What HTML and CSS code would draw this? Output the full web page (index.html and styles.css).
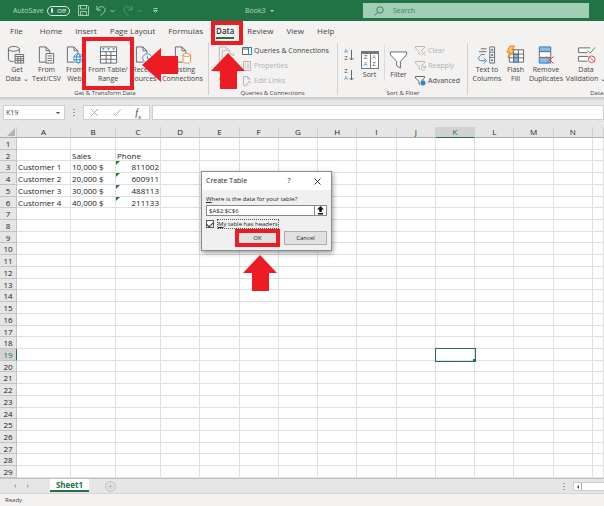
FILE: index.html
```html
<!DOCTYPE html>
<html lang="en">
<head>
<meta charset="utf-8">
<title>Book3 - Excel</title>
<link rel="stylesheet" href="styles.css">
</head>
<body>
<header class="titlebar">
  <span class="autosave">AutoSave</span>
  <button class="toggle" type="button"><i class="knob"></i>Off</button>
  <button class="quick" type="button" aria-label="Save"><svg width="11" height="11" viewBox="0 0 11 11"><path d="M.5.5h9l1 1v9H.5zM2.500.5v3.500h6v-3.500M2.500 10.500v-4h6v4M4.500 8.500v2"/></svg></button>
  <button class="quick undo" type="button" aria-label="Undo"><svg width="10" height="11" viewBox="0 0 10 11"><path d="M1 1v4h4M1 5C3 1.500 6 .8 8 2.500S9.500 7 4.500 10.500"/></svg></button>
  <svg class="chev" width="5" height="4" viewBox="0 0 5 4"><path d="M.5 1l2 2 2-2"/></svg>
  <button class="quick faded" type="button" aria-label="Redo"><svg width="10" height="11" viewBox="0 0 10 11"><path d="M9 1v4H5M9 5C7 1.500 4 .8 2 2.500S.5 7 5.500 10.500"/></svg></button>
  <svg class="chev faded" width="5" height="4" viewBox="0 0 5 4"><path d="M.5 1l2 2 2-2"/></svg>
  <svg class="chev more" width="5" height="6" viewBox="0 0 5 6"><path d="M.5.5h4M.5 2.500l2 2 2-2z"/></svg>
  <button class="book" type="button">Book3 <span class="caret"></span></button>
  <label class="search"><svg width="10" height="10" viewBox="0 0 10 10"><circle cx="6" cy="4" r="3.200"/><path d="M3.700 6.300L.6 9.400"/></svg><input type="text" placeholder="Search" aria-label="Search"></label>
</header>

<nav class="tabs">
  <a href="#" class="file">File</a><a href="#">Home</a><a href="#">Insert</a><a href="#">Page Layout</a><a href="#">Formulas</a><a href="#" class="current">Data</a><a href="#">Review</a><a href="#">View</a><a href="#">Help</a>
</nav>

<main class="ribbon">
  <section class="group transform">
    <div class="tools">
      <button class="big" type="button"><svg width="20" height="20" viewBox="0 0 20 20"><path d="M13 8V3.500C13 2 10 1 7 1S1.500 2 1.500 3.500v11C1.500 16 4 17 7 17M1.500 3.500C1.500 5 4 6 7 6s6-1 6-2.500"/><path class="w" d="M8.500 9.500h9v9h-9z"/><path d="M8.500 11.500h9M8.500 14h9M8.500 16h9M11.500 11.500v7M14.500 11.500v7"/></svg>Get<br>Data ⌄</button>
      <button class="big" type="button"><svg width="20" height="20" viewBox="0 0 20 20"><path d="M10 17.500H2.500v-16h7l4 4V8M9.500 1.500v4h4"/><path class="w" d="M9.500 8.500h8v10h-8z"/><path d="M11 11h5M11 13.500h5M11 16h5"/></svg>From<br>Text/CSV</button>
      <button class="big" type="button"><svg width="20" height="20" viewBox="0 0 20 20"><path d="M10 17.500H2.500v-16h7l4 4V8M9.500 1.500v4h4"/><g class="blue"><circle class="w" cx="14" cy="13.500" r="4.800"/><ellipse cx="14" cy="13.500" rx="2" ry="4.800"/><path d="M9.500 12h9M9.500 15h9"/></g></svg>From<br>Web</button>
      <button class="big" type="button"><svg width="20" height="20" viewBox="0 0 20 20"><path class="w" d="M1.500 1.500h17v17h-17z"/><path d="M1.500 6.500h17M1.500 10.500h17M1.500 14.500h17M7.500 6.500v12M12.500 6.500v12"/><path class="fillblue" d="M3 3h3L4.500 5zM8.500 3h3L10 5zM14 3h3l-1.500 2z"/></svg>From Table/<br>Range</button>
      <button class="big" type="button"><svg width="20" height="20" viewBox="0 0 20 20"><path d="M10 17.500H2.500v-16h7l4 4V8M9.500 1.500v4h4"/><g class="blue"><circle class="w" cx="14" cy="13.500" r="4.800"/><path d="M14 10.500v3.500h2.500"/></g></svg>Recent<br>Sources</button>
      <button class="big" type="button"><svg width="20" height="20" viewBox="0 0 20 20"><path d="M10 17.500H2.500v-16h7l4 4V8M9.500 1.500v4h4"/><g class="orange"><path class="w" d="M10.500 10v7c0 2 8 2 8 0v-7c0-2-8-2-8 0c0 2 8 2 8 0"/></g></svg>Existing<br>Connections</button>
    </div>
    <h2>Get &amp; Transform Data</h2>
  </section>
  <section class="group queries">
    <div class="tools">
      <button class="big dim" type="button"><svg width="20" height="20" viewBox="0 0 20 20"><path d="M10 17.500H2.500v-16h7l4 4V8M9.500 1.500v4h4M5.500 14V5.500h3"/><path d="M10 12c1-4 6-4 7.500-1V8.500M18 13c-1 4-6 4-7.500 1V17"/></svg>Refresh<br>All ⌄</button>
      <div class="stack">
        <button type="button"><svg width="10" height="10" viewBox="0 0 10 10"><path class="w" d="M.5 1.500h9v7h-9zM.5 3h9"/><path class="blue w" d="M6.500 1.500h3v7h-3z"/></svg>Queries &amp; Connections</button>
        <button class="dim" type="button"><svg width="10" height="10" viewBox="0 0 10 10"><path d="M1.500.5h7v9h-7zM3 3h1M5 3h2M3 5h1M5 5h2M3 7h1M5 7h2"/></svg>Properties</button>
        <button class="dim" type="button"><svg width="10" height="10" viewBox="0 0 10 10"><path d="M4 9.500H1.500v-9h4l2 2V4M5.500.5v2h2M5 8L7 6M4.500 7.500c-1 1 1 2.500 2 1.500M6.500 5.500c1-1 3 .5 2 2"/></svg>Edit Links</button>
      </div>
    </div>
    <h2>Queries &amp; Connections</h2>
  </section>
  <section class="group sorting">
    <div class="tools">
      <div class="sorts">
        <button type="button" aria-label="Sort A to Z"><span class="az"><b>A</b><i>Z</i></span><svg width="5" height="11" viewBox="0 0 5 11"><path d="M2.500 0v10M.5 8l2 2 2-2"/></svg></button>
        <button type="button" aria-label="Sort Z to A"><span class="az"><i>Z</i><b>A</b></span><svg width="5" height="11" viewBox="0 0 5 11"><path d="M2.500 0v10M.5 8l2 2 2-2"/></svg></button>
      </div>
      <button class="big sort" type="button"><span class="sorticon"><span><i>Z</i><b>A</b></span><span><b>A</b><i>Z</i></span></span>Sort</button>
      <button class="big filter" type="button"><svg width="20" height="20" viewBox="0 0 20 20"><path class="w" d="M1.500 1.500h17v3l-6.500 7v7l-4-2.500v-4.500l-6.500-7z"/></svg>Filter</button>
      <div class="stack">
        <button class="dim" type="button"><svg width="11" height="10" viewBox="0 0 11 10"><path d="M.5.5h9v1.500l-3.500 3M.5.5V2L4 5.500V8l1 .8M6.500 5.500l4 4M10.500 5.500l-4 4"/></svg>Clear</button>
        <button class="dim" type="button"><svg width="11" height="10" viewBox="0 0 11 10"><path d="M.5.5h9v1.500l-3.500 3M.5.5V2L4 5.500V8l1 .8M10 6.500C9 4.500 6.500 5 6.500 7.200S9 9.800 10.500 8M10.500 4.500v2h-2"/></svg>Reapply</button>
        <button type="button"><svg width="11" height="10" viewBox="0 0 11 10"><path d="M.5.5h9v1.500l-3 2.500M.5.5V2L4 5.500V8l1 .8"/><path class="gear" d="M8 4.500v5M5.500 7h5M6.200 5.200l3.600 3.600M9.800 5.200L6.200 8.800"/></svg>Advanced</button>
      </div>
    </div>
    <h2>Sort &amp; Filter</h2>
  </section>
  <section class="group datatools">
    <div class="tools">
      <button class="big" type="button"><svg width="20" height="20" viewBox="0 0 20 20"><path d="M4 3.500h6M2 6.500h8M4 9.500h4"/><path class="w" d="M13.500 1.500h5v17h-5zM13.500 7h5M13.500 12.500h5"/><path class="fillblue" d="M15 3.500h2v2h-2zM15 9h2v2h-2zM15 14.500h2v2h-2z"/><path class="blue" d="M4 10.500c-3 1-3 5.500 0 5.500h5M7 13l3 3-3 3"/></svg>Text to<br>Columns</button>
      <button class="big" type="button"><svg width="20" height="20" viewBox="0 0 20 20"><path class="w" d="M3.500 4.500h15v13h-15z"/><path class="sky" d="M8 9h5v8.500H8z"/><path d="M3.500 9h15M3.500 13h15M8 4.500v13M13 4.500v13"/><path class="bolt" d="M4 .5h5L6.500 5H9L2 13l2-6H1z"/></svg>Flash<br>Fill</button>
      <button class="big" type="button"><svg width="20" height="20" viewBox="0 0 20 20"><path class="sky" d="M3.500 1.500h12v5h-12zM3.500 12.500h12v6h-12z"/><path class="w" d="M3.500 6.500h12v6h-12z"/><path class="red" d="M10.500 11.500l8 7.500M18.500 11.500l-8 7.500"/></svg>Remove<br>Duplicates</button>
      <button class="big" type="button"><svg width="20" height="20" viewBox="0 0 20 20"><path class="w" d="M11 7.500H1.500v-5H14M11 16.500H1.500v-5H12"/><path class="green" d="M11 5l3 3 5-6"/><circle class="red w" cx="15.500" cy="14.500" r="3.500"/><path class="red" d="M13 12l5 5"/></svg>Data<br>Validation ⌄</button>
    </div>
    <h2>Data Tools</h2>
  </section>
</main>

<section class="formula">
  <label class="namebox"><input type="text" value="K19" aria-label="Name box"><span class="caret"></span></label>
  <span class="dots"></span>
  <div class="fx">
    <button type="button" aria-label="Cancel entry"><svg width="9" height="9" viewBox="0 0 9 9"><path d="M1 1l7 7M8 1L1 8"/></svg></button>
    <button type="button" aria-label="Enter"><svg width="9" height="9" viewBox="0 0 9 9"><path d="M1 5l2.500 2.500L8.500 1.500"/></svg></button>
    <button type="button" class="fn" aria-label="Insert function">f<sub>x</sub></button>
  </div>
  <input class="entry" type="text" aria-label="Formula bar">
</section>

<table class="sheet">
  <thead></thead>
  <tbody></tbody>
</table>

<footer class="sheettabs">
  <span class="move prev"></span><span class="move next"></span>
  <button class="tab" type="button">Sheet1</button>
  <button class="add" type="button" aria-label="New sheet"><svg width="11" height="11" viewBox="0 0 11 11"><circle cx="5.500" cy="5.500" r="4.800"/><path d="M5.500 3v5M3 5.500h5"/></svg></button>
  <span class="dots split"></span>
  <div class="scroll"><button type="button" aria-label="Scroll left"></button></div>
</footer>
<div class="status">Ready</div>

<form class="dialog" role="dialog" aria-label="Create Table">
  <div class="dialoghead"><span>Create Table</span><button type="button" aria-label="Help">?</button><button type="button" aria-label="Close"><svg width="7" height="7" viewBox="0 0 7 7"><path d="M.5.5l6 6M6.500.5l-6 6"/></svg></button></div>
  <div class="dialogbody">
    <label for="range"><u>W</u>here is the data for your table?</label>
    <div class="range"><input id="range" type="text" value="$A$2:$C$6"><button type="button" aria-label="Collapse"><svg width="7" height="9" viewBox="0 0 7 9"><path d="M3.500 0L7 3.500H4.800V6H2.200V3.500H0zM1 7h5v1.500H1z"/></svg></button></div>
    <div class="check"><input id="headers" type="checkbox" checked><label for="headers"><u>M</u>y table has headers</label></div>
    <div class="actions"><button type="button" class="ok">OK</button><button type="button">Cancel</button></div>
  </div>
</form>

<div class="mark mark-tab"></div>
<div class="mark mark-range"></div>
<svg class="arrow arrow-range" width="36" height="34" viewBox="0 0 36 34"><path d="M0 17L19 0v8h17v18H19v8z"/></svg>
<svg class="arrow arrow-tab" width="34" height="36" viewBox="0 0 34 36"><path d="M17 0l17 18h-8v18H9V18H0z"/></svg>
<svg class="arrow arrow-ok" width="34" height="36" viewBox="0 0 34 36"><path d="M17 0l17 18h-8v18H9V18H0z"/></svg>
<script src="sheet.js"></script>
</body>
</html>
```
FILE: styles.css
```css
* { box-sizing: border-box; }
body {
  margin: 0;
  height: 100vh;
  display: flex;
  flex-direction: column;
  position: relative;
  overflow: hidden;
  background: #e6e6e6;
  color: #444;
  font: 8px/10px "Open Sans", "Noto Sans", sans-serif;
}
button, input { font: inherit; color: inherit; border: 0; padding: 0; margin: 0; background: none; min-width: 0; }
a { color: inherit; text-decoration: none; }
svg { display: block; flex: none; fill: none; stroke: #666; stroke-width: 1; }

.titlebar { flex: none; height: 21px; display: flex; align-items: center; padding: 0 15px 0 13px; background: #217346; color: #b9d8c6; font-size: 7px; }
.titlebar svg { stroke: #a3cdb4; }
.autosave { width: 34px; }
.toggle { width: 23px; height: 10px; display: flex; align-items: center; gap: 4px; padding: 0 3px; border: 1px solid #d8eade; border-radius: 5px; font-size: 6px; line-height: 8px; color: #fff; }
.knob { width: 5px; height: 5px; border-radius: 50%; background: #fff; }
.quick { margin-left: 8px; }
.undo { margin-left: 7px; }
.chev { margin-left: 4px; }
.more { margin-left: 11px; }
.titlebar .faded { opacity: .4; }
.book { margin-left: 87px; display: flex; align-items: center; gap: 4px; }
.caret { border: 2px solid transparent; border-top-color: currentColor; border-bottom: 0; }
.search { flex: 1; max-width: 226px; height: 15px; margin-left: auto; display: flex; align-items: center; gap: 9px; padding-left: 11px; background: #a0cdb4; color: #3e8460; }
.titlebar .search svg { stroke: #3e8460; }
.search input { flex: 1; }
.search input::placeholder { color: #3e8460; opacity: 1; }

.tabs { flex: none; height: 20px; display: flex; gap: 13px; padding: 4px 10px 0; background: #f3f2f1; white-space: nowrap; }
.tabs a { height: 14px; line-height: 12px; }
.tabs .file { margin-right: 4px; }
.tabs .current { font-weight: 600; color: #333; border-bottom: 2px solid #217346; }

.ribbon { flex: none; height: 57px; display: flex; overflow: hidden; background: #f3f2f1; border-bottom: 1px solid #ccc; font-size: 7px; line-height: 9px; }
.group { flex: none; display: flex; flex-direction: column; justify-content: space-between; position: relative; padding: 2px 0 0 2px; }
.group + .group::before { content: ""; position: absolute; left: 0; top: 2px; bottom: 2px; border-left: 1px solid #d2d0ce; }
.group h2 { margin: 0; text-align: center; font-size: 6px; line-height: 7px; font-weight: 400; white-space: nowrap; }
.tools { display: grid; }
.big { display: block; justify-self: center; text-align: center; white-space: nowrap; line-height: 9px; height: 42px; }
.big svg { width: 19px; height: 20px; margin: 0 auto; }
.w { fill: #fff; }
.blue, .blue * { stroke: #2b88d0; }
.fillblue { fill: #2b88d0; stroke: none; }
.orange * { stroke: #ed8733; }
.sky { fill: #83bdec; stroke: #2b79b9; }
.red { stroke: #e8434b; }
.green { stroke: #3a9a60; }
.bolt { fill: #fbc55a; stroke: #e8802a; }
.gear { stroke: #2b88d0; stroke-width: 2; }
.dim { color: #b1b1b1; }
.dim svg { stroke: #b8b8b8; }
.stack { display: grid; grid-template-rows: repeat(3, 15px); align-items: center; }
.stack button { display: flex; align-items: center; gap: 2px; white-space: nowrap; }
.transform { width: 208px; }
.transform .tools { grid-template-columns: 30px 29px 27px 40px 31px 47px; }
.queries { width: 129px; }
.queries .tools { grid-template-columns: 32px 1fr; }
.queries h2 { padding-right: 2px; }
.sorting { width: 130px; }
.sorting .tools { grid-template-columns: 18px 25px 33px 1fr; }
.datatools { width: 274px; }
.datatools .tools { grid-template-columns: 36px 21px 40px 40px; }
.sorts { display: grid; grid-template-rows: 20px 20px; align-items: center; padding: 2px 0 0 4px; }
.sorts button { display: flex; align-items: center; }
.az { width: 6px; display: grid; font-size: 6px; line-height: 7px; }
.ribbon b { font-weight: 400; color: #2b88d0; }
.ribbon i { font-style: normal; }
.sorticon { width: 18px; height: 18px; margin: 1px 0; display: grid; grid-template-columns: 1fr 1fr; background: #fff; border: 1px solid #777; border-top-width: 3px; font-size: 6px; line-height: 7px; }
.sorticon span { display: grid; }
.sorticon span + span { border-left: 1px solid #777; }
.filter { width: 100%; position: relative; }
.filter::before { content: ""; position: absolute; left: 2px; top: 2px; height: 36px; border-left: 1px solid #dddbd9; }

.formula { flex: none; height: 29px; display: flex; align-items: flex-start; padding-top: 5px; border-top: 2px solid #d6d6d6; font-size: 7px; }
.formula > * { height: 15px; }
.namebox, .fx, .entry { background: #fff; border: 1px solid #cfcfcf; }
.namebox { width: 62px; margin-left: 3px; display: flex; align-items: center; padding: 0 4px 0 2px; }
.namebox input { flex: 1; }
.dots { width: 2px; margin: 0 8px; background: radial-gradient(circle, #999 1px, transparent 1px) 0 3px / 2px 3px no-repeat, radial-gradient(circle, #999 1px, transparent 1px) 0 6px / 2px 3px no-repeat, radial-gradient(circle, #999 1px, transparent 1px) 0 9px / 2px 3px no-repeat; }
.fx { width: 67px; display: grid; grid-template-columns: repeat(3, 1fr); align-items: center; justify-items: center; }
.fx svg { stroke: #aaa; }
.fn { font: italic 10px/12px "Liberation Serif", serif; }
.fn sub { font-size: 7px; line-height: 1px; }
.entry { flex: 1; margin-left: 2px; }

.sheet { flex: 1; min-height: 0; display: flex; flex-direction: column; background: #fff; color: #222; }
.sheet tr { display: grid; grid-template-columns: 17px 54px 45px 45px repeat(11, 39fr) 11fr; }
.sheet thead { display: block; flex: none; }
.sheet thead tr { height: 11px; }
.sheet tbody { flex: 1; min-height: 0; display: flex; flex-direction: column; }
.sheet tbody tr { flex: 1 1 0; min-height: 0; }
.sheet th, .sheet td { display: block; min-width: 0; min-height: 0; padding: 0 1px; line-height: 11px; white-space: nowrap; border: 0 solid #dfdfdf; border-width: 0 1px 1px 0; position: relative; }
.sheet th { background: #e6e6e6; border-color: #c3c3c3; font-weight: 400; text-align: center; }
.sheet thead th { border-right-color: #cfcfcf; border-bottom-color: #ababab; line-height: 10px; }
.sheet thead th.on { background: #d2d2d2; color: #217346; border-bottom-color: #217346; }
.sheet tbody th.on { background: #d2d2d2; color: #217346; border-right-color: #217346; }
.sheet .corner::after { content: ""; position: absolute; right: 1px; bottom: 1px; border: 4px solid #b5b5b5; border-left-color: transparent; border-top-color: transparent; }
.sheet .num { text-align: right; }
.sheet .num::before { content: ""; position: absolute; left: 0; top: 0; border: 2px solid #1c7d2c; border-right-color: transparent; border-bottom-color: transparent; }
.sheet .cursor { outline: 1px solid #217346; z-index: 1; }
.sheet .cursor::after { content: ""; position: absolute; right: -2px; bottom: -2px; width: 3px; height: 3px; background: #217346; }

.sheettabs { flex: none; height: 15px; display: flex; border-top: 1px solid #c4c4c4; }
.move { margin-top: 5px; height: 4px; border: 2px solid transparent; }
.prev { border-right-color: #aaa; margin-left: 12px; }
.next { border-left-color: #aaa; margin-left: 11px; }
.tab { width: 39px; height: 13px; margin-left: 19px; background: #fff; border-bottom: 2px solid #217346; color: #217346; font-weight: 700; line-height: 10px; }
.add { margin-left: 16px; }
.add svg { stroke: #bdbdbd; }
.split { margin-left: auto; }
.scroll { width: 31px; height: 9px; margin-top: 3px; background: #fff; border: 1px solid #ccc; border-right: 0; }
.scroll button { display: flex; align-items: center; justify-content: center; width: 8px; height: 7px; border-right: 1px solid #aaa; }
.scroll button::before { content: ""; border: 2px solid transparent; border-right-color: #444; border-left: 0; }
.status { flex: none; height: 13px; padding-left: 5px; background: #f3f2f1; border-top: 1px solid #d6d6d6; font-size: 6px; line-height: 12px; }

.dialog { position: absolute; left: 201px; top: 171px; width: 131px; background: #f0f0f0; border: 1px solid #8c8c8c; box-shadow: 1px 2px 5px #0006; color: #222; font-size: 6px; line-height: 8px; }
.dialoghead { height: 18px; display: grid; grid-template-columns: 1fr 28px 28px; align-items: center; justify-items: center; padding-left: 4px; background: #fff; font-size: 7px; }
.dialoghead span { justify-self: start; }
.dialoghead svg { stroke: #333; }
.dialogbody { display: grid; gap: 2px; padding: 5px 4px 5px; }
.range { display: flex; height: 11px; background: #fff; border: 1px solid #888; }
.range input { flex: 1; padding-left: 2px; }
.range button { width: 12px; display: flex; align-items: center; justify-content: center; border-left: 1px solid #888; }
.range svg { fill: #111; stroke: none; }
.check { display: flex; align-items: center; gap: 3px; height: 11px; }
.check input { appearance: none; width: 8px; height: 8px; background: #fff; border: 1px solid #555; display: grid; place-items: center; }
.check input::before { content: ""; width: 5px; height: 3px; border: solid #333; border-width: 0 0 1px 1px; transform: rotate(-45deg); }
.check label { border: 1px dotted #555; }
.actions { display: flex; justify-content: flex-end; gap: 4px; }
.actions button { width: 43px; height: 14px; background: #e1e1e1; border: 1px solid #adadad; }
.actions .ok { width: 45px; height: 18px; margin: -2px 0; border: 4px solid #ed1c24; line-height: 10px; }

.mark { position: absolute; border: 4px solid #ed1c24; }
.mark-tab { left: 211px; top: 21px; width: 32px; height: 24px; }
.mark-range { left: 82px; top: 37px; width: 52px; height: 53px; }
.arrow { position: absolute; fill: #ed1c24; stroke: none; }
.arrow-range { left: 142px; top: 48px; }
.arrow-tab { left: 211px; top: 53px; }
.arrow-ok { left: 243px; top: 255px; }
```
FILE: sheet.js
```js
const columns = "ABCDEFGHIJKLMNO".split("");
const rowCount = 29;
const active = { column: "K", row: 19 };
const cells = {
  B2: "Sales", C2: "Phone",
  A3: "Customer 1", B3: "10,000 $", C3: "811002",
  A4: "Customer 2", B4: "20,000 $", C4: "600911",
  A5: "Customer 3", B5: "30,000 $", C5: "488113",
  A6: "Customer 4", B6: "40,000 $", C6: "211133"
};

function add(row, tag, text, className) {
  const cell = document.createElement(tag);
  cell.textContent = text;
  if (className) cell.className = className;
  row.append(cell);
}

const head = document.querySelector(".sheet thead").insertRow();
add(head, "th", "", "corner");
for (const c of columns) add(head, "th", c === "O" ? "" : c, c === active.column ? "on" : "");

const body = document.querySelector(".sheet tbody");
for (let r = 1; r <= rowCount; r++) {
  const row = body.insertRow();
  add(row, "th", r, r === active.row ? "on" : "");
  for (const c of columns) {
    const text = cells[c + r] || "";
    let name = "";
    if (c === "C" && r > 2 && text) name = "num";
    if (c === active.column && r === active.row) name = "cursor";
    add(row, "td", text, name);
  }
}
```
